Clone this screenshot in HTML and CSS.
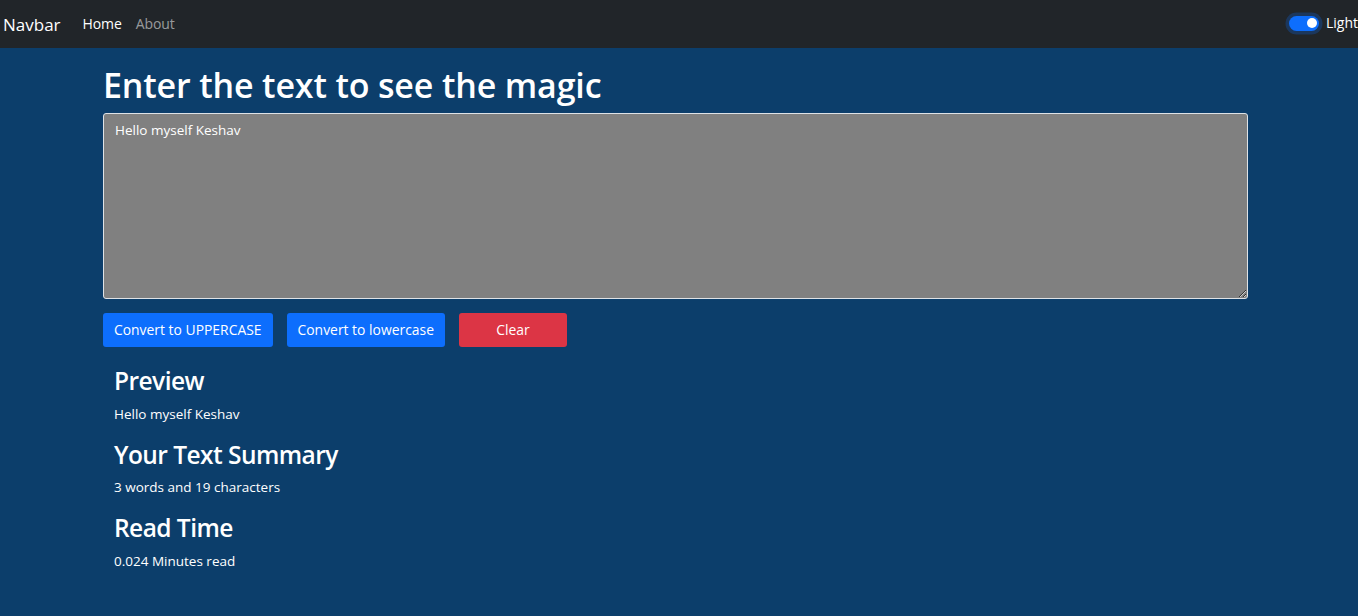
FILE: index.html
```html
<!DOCTYPE html>
<html lang="en">
<head>
<meta charset="utf-8">
<title>TextUtils</title>
<link rel="stylesheet" href="styles.css">
</head>
<body>
<nav class="navbar">
  <a class="brand" href="#">Navbar</a>
  <ul class="nav-links">
    <li><a class="nav-link active" href="#">Home</a></li>
    <li><a class="nav-link" href="#">About</a></li>
  </ul>
  <div class="switch">
    <span class="switch-track"><span class="switch-knob"></span></span>
    <label class="switch-label">Light</label>
  </div>
</nav>
<main class="page">
  <section class="editor">
    <h1 class="title">Enter the text to see the magic</h1>
    <textarea class="textbox" rows="8">Hello myself Keshav</textarea>
    <div class="actions">
      <button class="btn btn-primary">Convert to UPPERCASE</button>
      <button class="btn btn-primary">Convert to lowercase</button>
      <button class="btn btn-danger btn-clear">Clear</button>
    </div>
  </section>
  <section class="summary">
    <h2 class="sub">Preview</h2>
    <p class="line">Hello myself Keshav</p>
    <h2 class="sub">Your Text Summary</h2>
    <p class="line">3 words and 19 characters</p>
    <h2 class="sub">Read Time</h2>
    <p class="line">0.024 Minutes read</p>
  </section>
</main>
</body>
</html>
```
FILE: styles.css
```css
* { box-sizing: border-box; }
html, body { margin: 0; padding: 0; }
body {
  background: #0c3e6b;
  color: #fff;
  font-family: "Open Sans", "Noto Sans", sans-serif;
  font-size: 14px;
  line-height: 1.5;
  height: 616px;
  overflow: hidden;
}
.navbar {
  height: 48px;
  background: #212529;
  display: flex;
  align-items: center;
  padding: 0 0 0 3px;
}
.brand {
  color: #fff;
  text-decoration: none;
  font-size: 17px;
  margin-right: 22px;
  line-height: 1;
}
.nav-links {
  list-style: none;
  display: flex;
  margin: 0;
  padding: 0;
}
.nav-link {
  display: block;
  color: rgba(255,255,255,0.55);
  text-decoration: none;
  font-size: 14px;
  padding: 0 14px 0 0;
  line-height: 1;
  letter-spacing: -0.1px;
}
.nav-link.active { color: #fff; }
.switch {
  margin-left: auto;
  display: flex;
  align-items: center;
  gap: 7px;
  position: relative;
  top: -1px;
}
.switch-track {
  width: 30px;
  height: 15px;
  border-radius: 8px;
  background: #0d6efd;
  box-shadow: 0 0 0 3.5px rgba(13,110,253,0.25);
  display: flex;
  align-items: center;
  justify-content: flex-end;
  padding-right: 2px;
}
.switch-knob {
  width: 10px;
  height: 10px;
  border-radius: 50%;
  background: #fff;
}
.switch-label { font-size: 14px; color: #fff; line-height: 1; }
.page {
  width: 1145px;
  margin-left: 103px;
  padding-top: 16px;
}
.title {
  margin: 0 0 6px;
  font-size: 34px;
  font-weight: 600;
  line-height: 43px;
  letter-spacing: -0.15px;
}
.textbox {
  display: block;
  width: 100%;
  height: 186px;
  background: #808080;
  color: #fff;
  border: 1px solid #dee2e6;
  border-radius: 3px;
  padding: 6px 11px;
  font-family: inherit;
  font-size: 13.5px;
  line-height: 1.5;
  resize: vertical;
  margin: 0 0 14px;
}
.actions {
  display: flex;
  gap: 14px;
}
.btn {
  height: 34px;
  border: 0;
  border-radius: 3px;
  color: #fff;
  font-family: inherit;
  font-size: 13.9px;
  padding: 0 11px;
  line-height: 34px;
}
.btn-upper { }
.btn-primary { background: #0d6efd; }
.btn-danger { background: #dc3545; }
.btn-clear { width: 108px; }
.summary {
  padding: 18px 0 0 11px;
}
.sub {
  margin: 0 0 6px;
  font-size: 24.5px;
  font-weight: 600;
  line-height: 32.5px;
  letter-spacing: -0.55px;
}
.line {
  margin: 0 0 14px;
  font-size: 13.5px;
  line-height: 21px;
}
```
